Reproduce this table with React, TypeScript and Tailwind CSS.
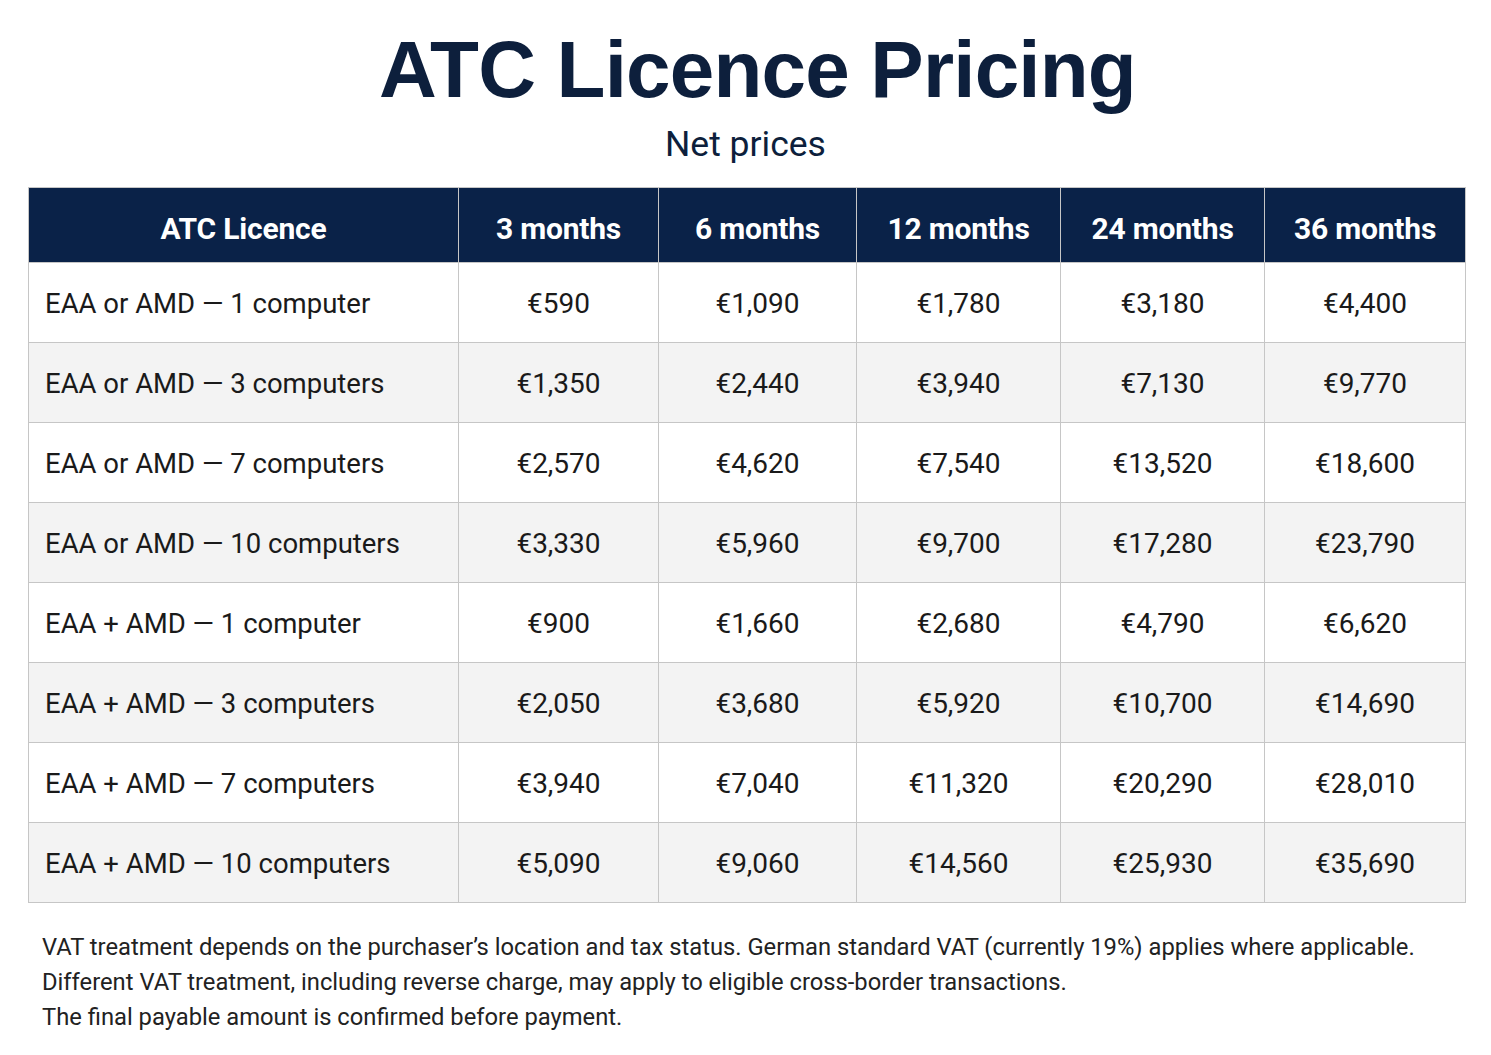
import React from "react";

const cols = ["3 months", "6 months", "12 months", "24 months", "36 months"];
const rows: [string, string[]][] = [
  ["EAA or AMD — 1 computer", ["€590", "€1,090", "€1,780", "€3,180", "€4,400"]],
  ["EAA or AMD — 3 computers", ["€1,350", "€2,440", "€3,940", "€7,130", "€9,770"]],
  ["EAA or AMD — 7 computers", ["€2,570", "€4,620", "€7,540", "€13,520", "€18,600"]],
  ["EAA or AMD — 10 computers", ["€3,330", "€5,960", "€9,700", "€17,280", "€23,790"]],
  ["EAA + AMD — 1 computer", ["€900", "€1,660", "€2,680", "€4,790", "€6,620"]],
  ["EAA + AMD — 3 computers", ["€2,050", "€3,680", "€5,920", "€10,700", "€14,690"]],
  ["EAA + AMD — 7 computers", ["€3,940", "€7,040", "€11,320", "€20,290", "€28,010"]],
  ["EAA + AMD — 10 computers", ["€5,090", "€9,060", "€14,560", "€25,930", "€35,690"]],
];
const widths = ["w-[430px]", "w-[200px]", "w-[198px]", "w-[204px]", "w-[204px]", "w-[201px]"];

export default function App() {
  return (
    <div className="w-[1491px] min-h-[1055px] bg-white font-['Roboto',sans-serif]">
      <h1 className="pt-[30px] pl-[24px] text-center font-['Liberation_Sans',Arial,sans-serif] text-[80px] font-bold leading-[80px] tracking-[-0.8px] text-[#0d1f3c]">
        ATC Licence Pricing
      </h1>
      <p className="mt-[14px] text-center text-[35.5px] leading-[40px] text-[#0d1f3c]">Net prices</p>
      <div className="mt-[23px] px-[28px]">
        <table className="w-[1437px] table-fixed border-collapse border border-[#c6c6c6]">
          <colgroup>
            {widths.map((w, i) => (
              <col key={i} className={w} />
            ))}
          </colgroup>
          <thead>
            <tr className="h-[75px] bg-[#0a2248]">
              <th className="border border-[#c6c6c6] pt-[6px] text-center text-[30px] font-bold tracking-[-0.2px] text-white">ATC Licence</th>
              {cols.map((c) => (
                <th key={c} className="border border-[#c6c6c6] pt-[6px] text-center text-[30px] font-bold tracking-[-0.2px] text-white">
                  {c}
                </th>
              ))}
            </tr>
          </thead>
          <tbody>
            {rows.map(([name, vals], i) => (
              <tr key={name} className={`h-[80px] ${i % 2 === 1 ? "bg-[#f3f3f3]" : "bg-white"}`}>
                <td className="border border-[#c6c6c6] pl-[16px] pt-[3px] text-left text-[27.5px] text-[#1a1a1a]">{name}</td>
                {vals.map((v, j) => (
                  <td key={j} className="border border-[#c6c6c6] pt-[3px] text-center text-[28px] text-[#1a1a1a]">
                    {v}
                  </td>
                ))}
              </tr>
            ))}
          </tbody>
        </table>
      </div>
      <div className="mt-[27px] pl-[42px] text-[23.75px] leading-[35px] text-[#222222]">
        <p>VAT treatment depends on the purchaser’s location and tax status. German standard VAT (currently 19%) applies where applicable.</p>
        <p>Different VAT treatment, including reverse charge, may apply to eligible cross-border transactions.</p>
        <p>The final payable amount is confirmed before payment.</p>
      </div>
    </div>
  );
}
